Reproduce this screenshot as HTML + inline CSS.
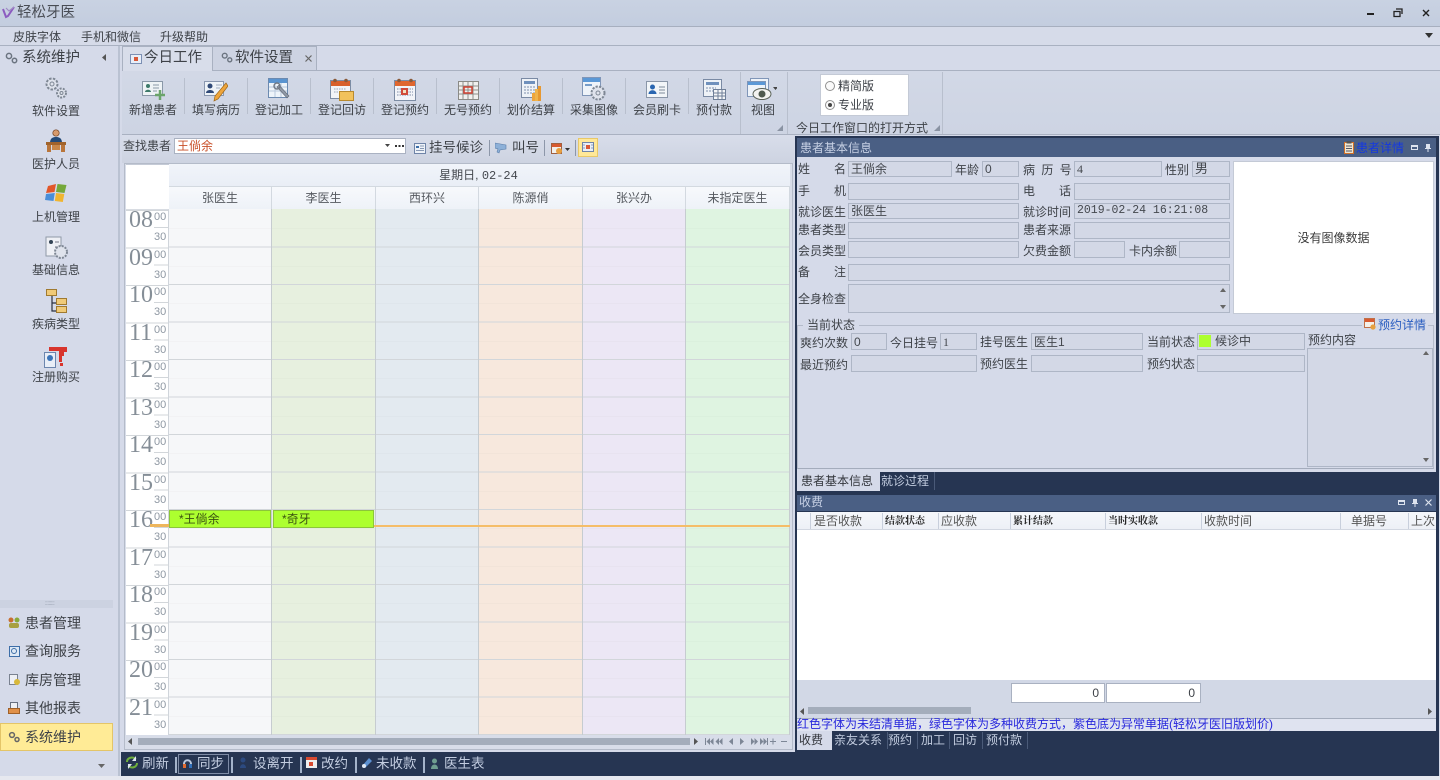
<!DOCTYPE html>
<html lang="zh"><head><meta charset="utf-8"><title>轻松牙医</title>
<style>
html,body{margin:0;padding:0}
body{width:1440px;height:780px;position:relative;overflow:hidden;background:#d5dae9;font-family:"Liberation Sans","Noto Sans CJK SC",sans-serif;font-size:12px;color:#3e4248}
div,span,svg{position:absolute;box-sizing:border-box}
.t{white-space:nowrap;line-height:14px;height:14px}
.b{font-size:13.5px}
.w{color:#c3cde0}
.f{background:#d3d8e6;border:1px solid #aeb6c6;line-height:14px;padding:1px 0 0 2px;white-space:nowrap;color:#44484e;font-size:12px}
.c{text-align:center}
.col{top:209px;height:526px;background-position:0 1px;background-image:repeating-linear-gradient(to bottom,transparent 0,transparent 36.5px,#d2d6da 36.5px,#d2d6da 37.5px),repeating-linear-gradient(to bottom,transparent 0,transparent 18.25px,rgba(0,0,0,.035) 18.25px,rgba(0,0,0,.035) 19.25px,transparent 19.25px,transparent 37.5px);border-right:1px solid #c6ccd0}
.h{font:24px/24px "Liberation Serif",serif;color:#858e97;left:129px;height:24px}
.m{font-size:11px;line-height:11px;color:#8f98a3;left:154px;height:11px;font-family:"Liberation Sans",sans-serif}
.hd{top:187px;height:22px;text-align:center;line-height:22px;border-right:1px solid #d3d9e0;background:linear-gradient(#f7f9fc,#eef2f8);color:#55595f}
.sep{width:1px;background:#b8bfcd;top:78px;height:36px}
.th{top:512px;height:18px;line-height:18px;color:#555;white-space:nowrap}
.thb{font-size:10px;line-height:20px;font-weight:bold;color:#222;font-family:"Liberation Sans","Noto Serif CJK SC",serif}
.v{width:1px;top:513px;height:16px;background:#c8cfdc}
.vb{width:2px;top:757px;height:16px;background:#a4b3ca}
</style></head><body>

<!-- title bar -->
<div style="left:0;top:0;width:1440px;height:27px;background:linear-gradient(#c9d2e2,#c3cddf);border-bottom:1px solid #a7afbf"></div>
<svg style="left:2px;top:5px" width="13" height="15" viewBox="0 0 13 15"><path d="M1 4l3 8 2-1 6-9" fill="none" stroke="#8c5cc0" stroke-width="2"/><path d="M4 3l3 3 5-4" fill="none" stroke="#a08bc4" stroke-width="1.2"/></svg>
<span class="t" style="left:17px;top:6px;font-size:14.5px;color:#484c54">轻松牙医</span>
<div style="left:1367px;top:13px;width:7px;height:2px;background:#222"></div>
<svg style="left:1393px;top:8px" width="10" height="10" viewBox="0 0 10 10"><path d="M3 1h6v5M1 3.5h6v5H1z" fill="none" stroke="#222" stroke-width="1.3"/></svg>
<svg style="left:1422px;top:9px" width="8" height="8" viewBox="0 0 8 8"><path d="M1 1l6 6M7 1l-6 6" stroke="#222" stroke-width="1.4"/></svg>

<!-- menu -->
<div style="left:0;top:27px;width:1440px;height:19px;background:#d6dbe9;border-bottom:1px solid #a9b1c1"></div>
<span class="t" style="left:13px;top:30px">皮肤字体</span>
<span class="t" style="left:81px;top:30px">手机和微信</span>
<span class="t" style="left:160px;top:30px">升级帮助</span>
<svg style="left:1425px;top:33px" width="8" height="5"><path d="M0 0h8L4 5z" fill="#333"/></svg>

<!-- left panel -->
<div style="left:0;top:46px;width:120px;height:734px;background:#d5dae9;border-right:2px solid #bac2d2"></div>
<svg style="left:5px;top:52px" width="13" height="12" viewBox="0 0 13 12"><circle cx="4" cy="4" r="2.6" fill="none" stroke="#6b7480" stroke-width="1.5"/><circle cx="9.5" cy="8.5" r="2.2" fill="none" stroke="#6b7480" stroke-width="1.5"/></svg>
<span class="t" style="left:22px;top:51px;font-size:14.5px">系统维护</span>
<svg style="left:102px;top:54px" width="4" height="7"><path d="M4 0v7L0 3.5z" fill="#555"/></svg>

<svg style="left:44px;top:76px" width="24" height="24" viewBox="0 0 24 24"><circle cx="8" cy="8" r="5.5" fill="#dfe3ec" stroke="#7e8794" stroke-width="2" stroke-dasharray="2.5 1.3"/><circle cx="8" cy="8" r="2" fill="none" stroke="#7e8794"/><circle cx="17.5" cy="17" r="4.5" fill="#dfe3ec" stroke="#7e8794" stroke-width="2" stroke-dasharray="2 1.2"/><circle cx="17.5" cy="17" r="1.5" fill="none" stroke="#7e8794"/></svg>
<span class="t" style="left:32px;top:104px">软件设置</span>
<svg style="left:44px;top:129px" width="24" height="24" viewBox="0 0 24 24"><circle cx="12" cy="4" r="3.2" fill="#d69a6c" stroke="#704020" stroke-width=".7"/><path d="M6 14c0-5 3-6 6-6s6 1 6 6z" fill="#234a78"/><rect x="2" y="13" width="20" height="3" fill="#a0632c"/><rect x="3" y="16" width="4" height="7" fill="#b9753a"/><rect x="17" y="16" width="4" height="7" fill="#b9753a"/><rect x="8" y="16" width="8" height="5" fill="#c98748"/></svg>
<span class="t" style="left:32px;top:157px">医护人员</span>
<svg style="left:45px;top:183px" width="23" height="22" viewBox="0 0 23 22"><path d="M3 3l8-2-1.500 8L1 10z" fill="#e2572a"/><path d="M12.500 1l9 1-2 8-8.500-1z" fill="#75a83a"/><path d="M1 11l8.800-1L8.500 18 0 17z" fill="#4a8ed8"/><path d="M11 10l8.300 1-1.500 8-8-1z" fill="#f0b530"/></svg>
<span class="t" style="left:32px;top:210px">上机管理</span>
<svg style="left:45px;top:236px" width="24" height="24" viewBox="0 0 24 24"><rect x="1" y="1" width="15" height="19" fill="#eef0f5" stroke="#9099a8"/><circle cx="6" cy="6" r="2" fill="#345"/><path d="M10 6h4M10 11h3" stroke="#778"/><circle cx="16" cy="16" r="6" fill="#dfe3ec" stroke="#7e8794" stroke-width="2" stroke-dasharray="2 1.2"/></svg>
<span class="t" style="left:32px;top:263px">基础信息</span>
<svg style="left:46px;top:289px" width="21" height="24" viewBox="0 0 21 24"><path d="M6 7v15h5M6 14h5" fill="none" stroke="#2a3140" stroke-width="1.2"/><rect x="0.500" y="0.500" width="10" height="6" fill="#f0ca78" stroke="#a07a30"/><rect x="10.500" y="9.500" width="10" height="6" fill="#f0ca78" stroke="#a07a30"/><rect x="10.500" y="17.500" width="10" height="6" fill="#f0ca78" stroke="#a07a30"/></svg>
<span class="t" style="left:32px;top:317px">疾病类型</span>
<svg style="left:44px;top:346px" width="24" height="22" viewBox="0 0 24 22"><path d="M5 1h18v5h-3v4h-2v6h-3V5H5z" fill="#d8342c"/><rect x="16" y="17" width="3" height="3" fill="#d8342c"/><rect x="0.500" y="6.500" width="11" height="15" fill="#e9eef7" stroke="#6c86ae"/><circle cx="6" cy="12" r="3" fill="#3b74b8"/></svg>
<span class="t" style="left:32px;top:370px">注册购买</span>

<div style="left:0;top:600px;width:113px;height:8px;background:#ccd2e1"></div>
<span class="t" style="left:45px;top:597px;font-size:6px;color:#8a92a2;letter-spacing:-.5px">::::::::</span>

<svg style="left:8px;top:617px" width="12" height="12"><circle cx="3" cy="3" r="2.5" fill="#c86e30"/><circle cx="9" cy="3" r="2.500" fill="#88a838"/><rect x="1" y="6" width="10" height="5" rx="2" fill="#a8a040"/></svg>
<span class="t b" style="left:25px;top:616px;font-size:14px">患者管理</span>
<svg style="left:9px;top:646px" width="11" height="11"><rect x=".5" y=".5" width="10" height="10" fill="#dde8f5" stroke="#3d6ea8"/><circle cx="5" cy="5" r="2.500" fill="none" stroke="#3d6ea8"/></svg>
<span class="t b" style="left:25px;top:644px;font-size:14px">查询服务</span>
<svg style="left:9px;top:674px" width="11" height="12"><rect x=".5" y=".5" width="8" height="10" fill="#eef0f5" stroke="#7a8290"/><circle cx="8" cy="8" r="3" fill="#d8b83a"/></svg>
<span class="t b" style="left:25px;top:673px;font-size:14px">库房管理</span>
<svg style="left:8px;top:702px" width="12" height="12"><rect x="2.500" y=".5" width="7" height="6" fill="#eef0f5" stroke="#687080"/><rect x=".5" y="6.500" width="11" height="5" fill="#e09048" stroke="#a06028"/></svg>
<span class="t b" style="left:25px;top:701px;font-size:14px">其他报表</span>
<div style="left:0;top:723px;width:113px;height:28px;background:#ffeb96;border:1px solid #e4c568"></div>
<svg style="left:8px;top:731px" width="12" height="12" viewBox="0 0 12 12"><circle cx="4" cy="4" r="2.400" fill="none" stroke="#666" stroke-width="1.500"/><circle cx="9" cy="8.500" r="2" fill="none" stroke="#666" stroke-width="1.500"/></svg>
<span class="t b" style="left:25px;top:730px;font-size:14px">系统维护</span>
<svg style="left:98px;top:764px" width="7" height="4"><path d="M0 0h7L3.500 4z" fill="#666"/></svg>

<!-- tabs -->
<div style="left:122px;top:70px;width:1318px;height:1px;background:#a9b1c1"></div>
<div style="left:122px;top:46px;width:91px;height:25px;background:#d8ddea;border:1px solid #a9b1c1;border-bottom:0"></div>
<div style="left:213px;top:46px;width:104px;height:24px;background:#cdd3e2;border:1px solid #a9b1c1;border-left:0;border-bottom:0"></div>
<svg style="left:130px;top:54px" width="12" height="10"><rect x=".5" y=".5" width="11" height="9" fill="#e8eef8" stroke="#7c90b4"/><rect x="4" y="3" width="4" height="4" fill="#d85838"/></svg>
<span class="t" style="left:144px;top:51px;font-size:14.5px">今日工作</span>
<svg style="left:221px;top:52px" width="12" height="11" viewBox="0 0 13 12"><circle cx="4" cy="4" r="2.600" fill="none" stroke="#6b7480" stroke-width="1.500"/><circle cx="9.500" cy="8.500" r="2.200" fill="none" stroke="#6b7480" stroke-width="1.500"/></svg>
<span class="t" style="left:235px;top:51px;font-size:14.5px">软件设置</span>
<svg style="left:305px;top:55px" width="7" height="7"><path d="M.5 .5l6 6M6.500 .5l-6 6" stroke="#666" stroke-width="1.200"/></svg>

<!-- ribbon -->
<div style="left:122px;top:71px;width:1318px;height:64px;background:linear-gradient(#d2d8e6,#cdd4e3);border-bottom:1px solid #a9b1c1"></div>
<svg style="left:142px;top:81px" width="24" height="20" viewBox="0 0 24 20"><rect x=".5" y=".5" width="20" height="14" fill="#eef3f5" stroke="#8a98a8"/><circle cx="6" cy="5" r="2" fill="#3d7a6a"/><path d="M3 11c0-3 6-3 6 0z" fill="#3d7a6a"/><path d="M11 4h6M11 7h6M11 10h4" stroke="#8a98a8"/><path d="M18 9v10M13 14h10" stroke="#6aa46a" stroke-width="2.500"/></svg>
<span class="t" style="left:129px;top:103px">新增患者</span>
<div class="sep" style="left:184px"></div>
<svg style="left:204px;top:80px" width="24" height="22" viewBox="0 0 24 22"><rect x=".5" y="1.500" width="19" height="14" fill="#eef3f8" stroke="#8a98b0"/><circle cx="6" cy="6" r="2.500" fill="#304a78"/><path d="M2 13c0-4 8-4 8 0z" fill="#304a78"/><path d="M12 5h6M12 8h4" stroke="#a0acc0"/><path d="M22 3l-11 13-1 5 4-2L24 6z" fill="#eea53c" stroke="#a06818" stroke-width=".7"/></svg>
<span class="t" style="left:192px;top:103px">填写病历</span>
<div class="sep" style="left:247px"></div>
<svg style="left:268px;top:78px" width="23" height="24" viewBox="0 0 23 24"><rect x=".5" y=".5" width="19" height="19" fill="#eef4fa" stroke="#6c8ab0"/><rect x="1" y="1" width="18" height="4" fill="#5a94d0"/><path d="M1 9h18M1 13h18M7 5v14M13 5v14" stroke="#b8c8dc"/><path d="M9 9l10 11 2-2L11 7z" fill="#8f98a6" stroke="#606874" stroke-width=".6"/><circle cx="9" cy="8" r="3" fill="none" stroke="#707884" stroke-width="1.400"/></svg>
<span class="t" style="left:255px;top:103px">登记加工</span>
<div class="sep" style="left:310px"></div>
<svg style="left:330px;top:78px" width="24" height="23" viewBox="0 0 24 23"><rect x=".5" y="2.500" width="20" height="18" fill="#f2f4f8" stroke="#7c8ca4"/><rect x="1" y="3" width="19" height="5" fill="#d8602c"/><circle cx="5" cy="2.500" r="1.800" fill="#8a5a3a"/><circle cx="16" cy="2.500" r="1.800" fill="#8a5a3a"/><path d="M4 11h12M4 14h12" stroke="#99a6ba" stroke-dasharray="1.500 1"/><rect x="9.500" y="13.500" width="14" height="9" fill="#f2c25c" stroke="#b98a2e"/></svg>
<span class="t" style="left:318px;top:103px">登记回访</span>
<div class="sep" style="left:373px"></div>
<svg style="left:394px;top:78px" width="22" height="23" viewBox="0 0 22 23"><rect x=".5" y="2.500" width="21" height="20" fill="#f2f4f8" stroke="#7c8ca4"/><rect x="1" y="3" width="20" height="5" fill="#e0662e"/><circle cx="5" cy="2.500" r="1.800" fill="#8a5a3a"/><circle cx="17" cy="2.500" r="1.800" fill="#8a5a3a"/><path d="M3 11h16M3 14h16M3 17h16" stroke="#7e8ca8" stroke-dasharray="1.500 1"/><rect x="7" y="10" width="7" height="7" fill="#d04a38"/><rect x="9" y="12" width="3" height="3" fill="#f2e0c0"/></svg>
<span class="t" style="left:381px;top:103px">登记预约</span>
<div class="sep" style="left:436px"></div>
<svg style="left:458px;top:79px" width="21" height="21" viewBox="0 0 21 21"><rect x=".5" y="2.500" width="20" height="18" fill="#f0f0ee" stroke="#8a8a86"/><path d="M1 7h19M1 11h19M1 15h19M5 3v17M10 3v17M15 3v17" stroke="#8f8f8c"/><rect x="6" y="8" width="8" height="6" fill="none" stroke="#d04030" stroke-width="1.500"/></svg>
<span class="t" style="left:444px;top:103px">无号预约</span>
<div class="sep" style="left:499px"></div>
<svg style="left:521px;top:78px" width="21" height="24" viewBox="0 0 21 24"><rect x=".5" y=".5" width="16" height="19" fill="#eef2f7" stroke="#7a8aa4"/><rect x="3" y="3" width="11" height="3" fill="#6f90bc"/><path d="M3 9h11M3 12h11M3 15h11" stroke="#7f90ac" stroke-dasharray="2 1"/><rect x="11" y="15" width="3" height="8" fill="#eea53c"/><rect x="14" y="11" width="3" height="12" fill="#f0b44c"/><rect x="17" y="8" width="3" height="15" fill="#e79830"/></svg>
<span class="t" style="left:507px;top:103px">划价结算</span>
<div class="sep" style="left:562px"></div>
<svg style="left:582px;top:77px" width="25" height="25" viewBox="0 0 25 25"><rect x=".5" y=".5" width="18" height="18" fill="#eef3f9" stroke="#8096b8"/><rect x="1" y="1" width="17" height="4" fill="#5b98d6"/><path d="M3 8h7" stroke="#4f7fb8" stroke-width="1.500"/><circle cx="16" cy="16" r="6.500" fill="#dfe3ec" stroke="#7e8794" stroke-width="2" stroke-dasharray="2.200 1.300"/><circle cx="16" cy="16" r="2" fill="none" stroke="#7e8794"/></svg>
<span class="t" style="left:570px;top:103px">采集图像</span>
<div class="sep" style="left:625px"></div>
<svg style="left:646px;top:81px" width="22" height="17" viewBox="0 0 22 17"><rect x=".5" y=".5" width="21" height="16" fill="#f2f5f8" stroke="#8a96a8"/><circle cx="6.500" cy="6" r="2.500" fill="#2a66b0"/><path d="M2.500 13c0-5 8-5 8 0z" fill="#2a66b0"/><path d="M13 6h6M13 9h6M13 12h6" stroke="#7f8c9a"/></svg>
<span class="t" style="left:633px;top:103px">会员刷卡</span>
<div class="sep" style="left:688px"></div>
<svg style="left:703px;top:79px" width="23" height="21" viewBox="0 0 23 21"><rect x=".5" y=".5" width="18" height="17" fill="#eef2f7" stroke="#7a8aa4"/><rect x="3" y="3" width="13" height="3" fill="#6f90bc"/><path d="M3 9h10M3 12h8" stroke="#7f90ac" stroke-dasharray="2 1"/><rect x="10.500" y="10.500" width="12" height="10" fill="#f4f6f8" stroke="#6f7f98"/><path d="M11 14h11M11 17h11M15 11v9M19 11v9" stroke="#6f7f98"/></svg>
<span class="t" style="left:696px;top:103px">预付款</span>
<div style="left:740px;top:72px;width:1px;height:62px;background:#b8bfcd"></div>
<svg style="left:747px;top:78px" width="30" height="24" viewBox="0 0 30 24"><rect x="3.500" y=".5" width="18" height="15" fill="#eef3f9" stroke="#8096b8"/><rect x=".5" y="3.500" width="18" height="15" fill="#eef3f9" stroke="#8096b8"/><rect x="1" y="4" width="17" height="3" fill="#5b98d6"/><ellipse cx="15" cy="16" rx="9" ry="5.500" fill="#f3f3f0" stroke="#5a6258"/><circle cx="15" cy="16" r="3.500" fill="#4f5a4e"/><path d="M26 9h5l-2.500 3z" fill="#444"/></svg>
<span class="t" style="left:751px;top:103px">视图</span>
<svg style="left:777px;top:125px" width="6" height="6"><path d="M6 0v6H0z" fill="#8a93a3"/></svg>
<div style="left:787px;top:72px;width:1px;height:62px;background:#b8bfcd"></div>
<div style="left:820px;top:74px;width:89px;height:42px;background:#fff;border:1px solid #c4cad6"></div>
<div style="left:825px;top:81px;width:10px;height:10px;border-radius:50%;border:1px solid #909090;background:#fafafa"></div>
<span class="t" style="left:838px;top:79px">精简版</span>
<div style="left:825px;top:100px;width:10px;height:10px;border-radius:50%;border:1px solid #909090;background:#fafafa"></div>
<div style="left:828px;top:103px;width:4px;height:4px;border-radius:50%;background:#444"></div>
<span class="t" style="left:838px;top:98px">专业版</span>
<span class="t" style="left:796px;top:121px">今日工作窗口的打开方式</span>
<svg style="left:934px;top:125px" width="6" height="6"><path d="M6 0v6H0z" fill="#8a93a3"/></svg>
<div style="left:942px;top:72px;width:1px;height:62px;background:#b8bfcd"></div>

<!-- search toolbar -->
<div style="left:122px;top:135px;width:672px;height:28px;background:linear-gradient(#d8ddea,#cdd3e1)"></div>
<span class="t" style="left:123px;top:139px">查找患者</span>
<div style="left:174px;top:138px;width:232px;height:16px;background:#fff;border:1px solid #aab2c2"></div>
<span class="t" style="left:177px;top:139px;color:#c8502a">王倘余</span>
<svg style="left:385px;top:144px" width="5" height="3"><path d="M0 0h5L2.500 3z" fill="#444"/></svg>
<div style="left:395px;top:145px;width:9px;height:2px;background-image:linear-gradient(to right,#333 2px,transparent 2px);background-size:3.500px 2px"></div>
<svg style="left:414px;top:143px" width="12" height="11"><rect x=".5" y=".5" width="11" height="10" fill="#eef2f8" stroke="#6f84a8"/><rect x="2" y="3" width="3" height="2" fill="#3d6ea8"/><path d="M6 3h4M6 5.500h4M2 7.500h8" stroke="#8798b4"/></svg>
<span class="t" style="left:429px;top:141px;font-size:13.500px">挂号候诊</span>
<div style="left:489px;top:140px;width:1px;height:16px;background:#8d97a9"></div>
<svg style="left:495px;top:142px" width="13" height="12"><path d="M0 1l11 2v4l-6 1-1 3-2-1 1-3-3-1z" fill="#8db0d8" stroke="#5a7ca8" stroke-width=".6"/></svg>
<span class="t" style="left:512px;top:141px;font-size:13.500px">叫号</span>
<div style="left:544px;top:140px;width:1px;height:16px;background:#8d97a9"></div>
<svg style="left:551px;top:143px" width="19" height="12"><rect x=".5" y=".5" width="10" height="10" fill="#f2f0ec" stroke="#a06040"/><rect x="1" y="1" width="9" height="3" fill="#d85a30"/><circle cx="8" cy="8" r="3" fill="#e6a040"/><path d="M14 5h5l-2.500 3z" fill="#333"/></svg>
<div style="left:575px;top:140px;width:1px;height:16px;background:#8d97a9"></div>
<div style="left:578px;top:138px;width:20px;height:19px;background:#ffe898;border:1px solid #e8c868"></div>
<svg style="left:582px;top:142px" width="12" height="10"><rect x=".5" y=".5" width="11" height="9" fill="#e8eef8" stroke="#6f84a8"/><rect x="4" y="3" width="4" height="4" fill="#d85838"/><path d="M1 3h2M9 3h2M1 6h2M9 6h2" stroke="#90a0bc"/></svg>

<!-- scheduler -->
<div style="left:124px;top:163px;width:669px;height:587px;background:#d8dde9;border:1px solid #b4bbc9"></div>
<div style="left:126px;top:164px;width:664px;height:571px;background:#fff;border-top:1px solid #c4cad6"></div>
<div style="left:169px;top:164px;width:621px;height:23px;background:linear-gradient(#f1f4fa,#e9eef6);text-align:center;line-height:23px;color:#44484e;padding-right:2px;border-bottom:1px solid #d3d9e0">星期日, <span style="position:static;font-family:'Liberation Mono',monospace;font-size:12px">02-24</span></div>
<div class="hd" style="left:169px;width:103px">张医生</div>
<div class="hd" style="left:272px;width:104px">李医生</div>
<div class="hd" style="left:376px;width:103px">西环兴</div>
<div class="hd" style="left:479px;width:104px">陈源俏</div>
<div class="hd" style="left:583px;width:103px">张兴办</div>
<div class="hd" style="left:686px;width:104px">未指定医生</div>
<div class="col" style="left:169px;width:103px;background-color:#f6f7f9"></div>
<div class="col" style="left:272px;width:104px;background-color:#e7f0df"></div>
<div class="col" style="left:376px;width:103px;background-color:#e3eaf0"></div>
<div class="col" style="left:479px;width:104px;background-color:#f7e8dd"></div>
<div class="col" style="left:583px;width:103px;background-color:#ece7f5"></div>
<div class="col" style="left:686px;width:104px;background-color:#dff4e1"></div>
<div style="left:126px;top:209px;width:43px;height:526px;background-position:0 1px;background-image:repeating-linear-gradient(to bottom,transparent 0,transparent 36.500px,#d2d6da 36.500px,#d2d6da 37.500px);border-right:1px solid #d0d5db;border-top:1px solid #d8dce2"></div>
<div style="left:154px;top:209px;width:15px;height:526px;background-image:repeating-linear-gradient(to bottom,transparent 0,transparent 18px,#d2d6da 18px,#d2d6da 19px,transparent 19px,transparent 37.500px)"></div>

<span class="h" style="top:208px">08</span><span class="m" style="top:212px">00</span><span class="m" style="top:232px">30</span>
<span class="h" style="top:246px">09</span><span class="m" style="top:250px">00</span><span class="m" style="top:270px">30</span>
<span class="h" style="top:283px">10</span><span class="m" style="top:287px">00</span><span class="m" style="top:307px">30</span>
<span class="h" style="top:321px">11</span><span class="m" style="top:325px">00</span><span class="m" style="top:345px">30</span>
<span class="h" style="top:358px">12</span><span class="m" style="top:362px">00</span><span class="m" style="top:382px">30</span>
<span class="h" style="top:396px">13</span><span class="m" style="top:400px">00</span><span class="m" style="top:420px">30</span>
<span class="h" style="top:433px">14</span><span class="m" style="top:437px">00</span><span class="m" style="top:457px">30</span>
<span class="h" style="top:471px">15</span><span class="m" style="top:475px">00</span><span class="m" style="top:495px">30</span>
<span class="h" style="top:508px">16</span><span class="m" style="top:512px">00</span><span class="m" style="top:532px">30</span>
<span class="h" style="top:546px">17</span><span class="m" style="top:550px">00</span><span class="m" style="top:570px">30</span>
<span class="h" style="top:583px">18</span><span class="m" style="top:587px">00</span><span class="m" style="top:607px">30</span>
<span class="h" style="top:621px">19</span><span class="m" style="top:625px">00</span><span class="m" style="top:645px">30</span>
<span class="h" style="top:658px">20</span><span class="m" style="top:662px">00</span><span class="m" style="top:682px">30</span>
<span class="h" style="top:696px">21</span><span class="m" style="top:700px">00</span><span class="m" style="top:720px">30</span>

<div style="left:150px;top:524px;width:19px;height:3px;background:#eeb65c"></div>
<div style="left:374px;top:525px;width:416px;height:2px;background:#f5bd68"></div>
<div style="left:169px;top:510px;width:102px;height:18px;background:#adff2f;border:1px solid #8cc63a"></div>
<span class="t" style="left:179px;top:512px;color:#3a5010">*王倘余</span>
<div style="left:273px;top:510px;width:101px;height:18px;background:#adff2f;border:1px solid #8cc63a"></div>
<span class="t" style="left:282px;top:512px;color:#3a5010">*奇牙</span>

<svg style="left:128px;top:738px" width="4" height="7"><path d="M4 0v7L0 3.500z" fill="#555"/></svg>
<div style="left:138px;top:738px;width:552px;height:7px;background:#a4adbb"></div>
<svg style="left:694px;top:738px" width="4" height="7"><path d="M0 0v7l4-3.500z" fill="#555"/></svg>
<svg style="left:704px;top:738px" width="84" height="7" viewBox="0 0 84 7"><path d="M1 0h1v7H1zM6 0L2.500 3.500 6 7zM9.500 0L6 3.500 9.500 7zM15 0l-3.500 3.500L15 7zM18.500 0L15 3.500 18.500 7zM29 0l-4 3.500 4 3.500zM36 0l4 3.500-4 3.500zM47 0l3.500 3.500L47 7zM50.500 0L54 3.500 50.500 7zM56 0l3.500 3.500L56 7zM59.500 0L63 3.500 59.500 7zM63 0h1v7h-1z" fill="#7d8796"/><path d="M66 3.500h6M69 .5v6M77 3.500h6" stroke="#7d8796"/></svg>

<!-- bottom bar -->
<div style="left:121px;top:752px;width:1318px;height:24px;background:#263552"></div>
<div style="left:0;top:776px;width:1440px;height:4px;background:#e6e8ef"></div>
<svg style="left:126px;top:756px" width="12" height="13"><path d="M1 6c0-4 5-6 9-3M11 7c0 4-5 6-9 3" fill="none" stroke="#6fb03c" stroke-width="2"/><path d="M10 0v5H6z" fill="#e0e6ef"/><path d="M2 13V8h4z" fill="#e0e6ef"/></svg>
<span class="t w" style="left:142px;top:757px;font-size:13.500px">刷新</span>
<div class="vb" style="left:175px"></div>
<div style="left:178px;top:754px;width:51px;height:20px;border:1px solid #7f8ca6"></div>
<svg style="left:182px;top:757px" width="11" height="12"><path d="M2 7c0-5 7-5 7 0" fill="none" stroke="#b8c6dc" stroke-width="2"/><rect x="1" y="7" width="3" height="4" fill="#e06a30"/><rect x="7" y="7" width="3" height="4" fill="#2f6eb8"/></svg>
<span class="t w" style="left:197px;top:757px;font-size:13.500px">同步</span>
<div class="vb" style="left:231px"></div>
<svg style="left:239px;top:757px" width="8" height="12"><circle cx="4" cy="3" r="2.500" fill="#2c4a80"/><path d="M1 11c0-5 6-5 6 0z" fill="#2c4a80"/></svg>
<span class="t w" style="left:253px;top:757px;font-size:13.500px">设离开</span>
<div class="vb" style="left:300px"></div>
<svg style="left:306px;top:757px" width="11" height="11"><rect width="11" height="11" fill="#eee"/><rect width="11" height="3" fill="#d84a30"/><rect x="3" y="5" width="4" height="4" fill="#d84a30"/></svg>
<span class="t w" style="left:321px;top:757px;font-size:13.500px">改约</span>
<div class="vb" style="left:355px"></div>
<svg style="left:361px;top:757px" width="11" height="12"><path d="M1 9l7-8 3 3-7 7z" fill="#5c90d0"/><circle cx="3" cy="9" r="2" fill="#e0e8f4"/></svg>
<span class="t w" style="left:376px;top:757px;font-size:13.500px">未收款</span>
<div class="vb" style="left:423px"></div>
<svg style="left:430px;top:758px" width="9" height="11"><circle cx="4.500" cy="3" r="2.500" fill="#6f9e90"/><path d="M1 11c0-6 7-6 7 0z" fill="#6f9e90"/></svg>
<span class="t w" style="left:444px;top:757px;font-size:13.500px">医生表</span>

<!-- right panel -->
<div style="left:795px;top:136px;width:644px;height:616px;background:#263552"></div>
<div style="left:797px;top:138px;width:639px;height:19px;background:#4a5f84"></div>
<span class="t" style="left:800px;top:141px;color:#c6d0e4">患者基本信息</span>
<svg style="left:1344px;top:141px" width="10" height="13"><rect x=".5" y="1.500" width="9" height="11" fill="#f0e6d0" stroke="#d07028"/><rect x="2.500" y="0" width="5" height="2.500" fill="#555"/><path d="M2 5h6M2 7.500h6M2 10h6" stroke="#556"/></svg>
<span class="t" style="left:1356px;top:141px;color:#1438e0">患者详情</span>
<div style="left:1411px;top:145px;width:7px;height:5px;border:1px solid #dde3ee;border-top-width:2px"></div>
<svg style="left:1425px;top:144px" width="6" height="8"><path d="M1 0h4v4h1v1H3.500v3h-1V5H0V4h1z" fill="#dde3ee"/></svg>
<div style="left:797px;top:157px;width:639px;height:315px;background:#d5dae9"></div>

<span class="t" style="left:798px;top:162px">姓</span><span class="t" style="left:834px;top:162px">名</span>
<div class="f" style="left:848px;top:161px;width:104px;height:16px;padding-top:0">王倘余</div>
<span class="t" style="left:955px;top:163px">年龄</span>
<div class="f" style="left:982px;top:161px;width:37px;height:16px;padding-top:0">0</div>
<span class="t" style="left:1023px;top:163px;word-spacing:3px">病 历 号</span>
<div class="f" style="left:1074px;top:161px;width:88px;height:16px;padding-top:0;font-family:'Liberation Serif',serif">4</div>
<span class="t" style="left:1165px;top:163px">性别</span>
<div class="f" style="left:1192px;top:161px;width:38px;height:16px;padding-top:0;font-size:13px">男</div>

<span class="t" style="left:798px;top:184px">手</span><span class="t" style="left:834px;top:184px">机</span>
<div class="f" style="left:848px;top:183px;width:171px;height:17px"></div>
<span class="t" style="left:1023px;top:184px">电</span><span class="t" style="left:1059px;top:184px">话</span>
<div class="f" style="left:1074px;top:183px;width:156px;height:17px"></div>

<span class="t" style="left:798px;top:205px">就诊医生</span>
<div class="f" style="left:848px;top:203px;width:171px;height:16px;padding-top:0">张医生</div>
<span class="t" style="left:1023px;top:205px">就诊时间</span>
<div class="f" style="left:1074px;top:203px;width:156px;height:16px;padding-top:0;font-family:'Liberation Mono',monospace;font-size:11.500px">2019-02-24 16:21:08</div>

<span class="t" style="left:798px;top:223px">患者类型</span>
<div class="f" style="left:848px;top:222px;width:171px;height:17px"></div>
<span class="t" style="left:1023px;top:223px">患者来源</span>
<div class="f" style="left:1074px;top:222px;width:156px;height:17px"></div>

<span class="t" style="left:798px;top:244px">会员类型</span>
<div class="f" style="left:848px;top:241px;width:171px;height:17px"></div>
<span class="t" style="left:1023px;top:244px">欠费金额</span>
<div class="f" style="left:1074px;top:241px;width:51px;height:17px"></div>
<span class="t" style="left:1129px;top:244px">卡内余额</span>
<div class="f" style="left:1179px;top:241px;width:51px;height:17px"></div>

<span class="t" style="left:798px;top:265px">备</span><span class="t" style="left:834px;top:265px">注</span>
<div class="f" style="left:848px;top:264px;width:382px;height:17px"></div>
<span class="t" style="left:798px;top:292px">全身检查</span>
<div class="f" style="left:848px;top:284px;width:382px;height:29px"></div>
<svg style="left:1220px;top:288px" width="6" height="4"><path d="M3 0l3 4H0z" fill="#666"/></svg>
<svg style="left:1220px;top:305px" width="6" height="4"><path d="M0 0h6L3 4z" fill="#666"/></svg>

<div style="left:1233px;top:161px;width:201px;height:153px;background:#fff;border:1px solid #c4cad6;text-align:center;line-height:152px;color:#3a3a3a">没有图像数据</div>

<div style="left:797px;top:325px;width:637px;height:144px;border:1px solid #b4bbca;border-bottom-color:#a4acbc"></div>
<span class="t" style="left:803px;top:318px;background:#d5dae9;padding:0 4px">当前状态</span>
<div style="left:1362px;top:318px;width:66px;height:14px;background:#d5dae9"></div>
<svg style="left:1364px;top:318px" width="12" height="12"><rect x=".5" y=".5" width="10" height="9" fill="#f4f0e8" stroke="#c07048"/><rect x="1" y="1" width="9" height="3" fill="#d85a30"/><circle cx="9" cy="9" r="2.600" fill="#e6a040"/></svg>
<span class="t" style="left:1378px;top:318px;color:#2a5ec0">预约详情</span>

<span class="t" style="left:800px;top:336px">爽约次数</span>
<div class="f" style="left:851px;top:333px;width:36px;height:17px">0</div>
<span class="t" style="left:890px;top:336px">今日挂号</span>
<div class="f" style="left:940px;top:333px;width:37px;height:17px;font-family:'Liberation Serif',serif">1</div>
<span class="t" style="left:980px;top:335px">挂号医生</span>
<div class="f" style="left:1031px;top:333px;width:112px;height:17px">医生1</div>
<span class="t" style="left:1147px;top:335px">当前状态</span>
<div class="f" style="left:1197px;top:333px;width:108px;height:17px"></div>
<div style="left:1199px;top:335px;width:12px;height:12px;background:#adff2f"></div>
<span class="t" style="left:1215px;top:334px">候诊中</span>
<span class="t" style="left:1308px;top:333px">预约内容</span>
<div class="f" style="left:1307px;top:348px;width:126px;height:119px"></div>
<svg style="left:1423px;top:351px" width="6" height="4"><path d="M3 0l3 4H0z" fill="#666"/></svg>
<svg style="left:1423px;top:458px" width="6" height="4"><path d="M0 0h6L3 4z" fill="#666"/></svg>

<span class="t" style="left:800px;top:358px">最近预约</span>
<div class="f" style="left:851px;top:355px;width:126px;height:17px"></div>
<span class="t" style="left:980px;top:357px">预约医生</span>
<div class="f" style="left:1031px;top:355px;width:112px;height:17px"></div>
<span class="t" style="left:1147px;top:357px">预约状态</span>
<div class="f" style="left:1197px;top:355px;width:108px;height:17px"></div>

<div style="left:797px;top:471px;width:83px;height:20px;background:#d5dae9"></div>
<span class="t" style="left:801px;top:474px;color:#33363c">患者基本信息</span>
<span class="t" style="left:881px;top:474px;color:#c3cde0">就诊过程</span>
<div style="left:934px;top:472px;width:1px;height:18px;background:#4a5a78"></div>

<div style="left:797px;top:495px;width:639px;height:16px;background:#4a5f84"></div>
<span class="t" style="left:799px;top:495px;color:#c6d0e4">收费</span>
<div style="left:1398px;top:500px;width:7px;height:5px;border:1px solid #dde3ee;border-top-width:2px"></div>
<svg style="left:1412px;top:499px" width="6" height="8"><path d="M1 0h4v4h1v1H3.500v3h-1V5H0V4h1z" fill="#dde3ee"/></svg>
<svg style="left:1425px;top:499px" width="7" height="7"><path d="M.5 .5l6 6M6.500 .5l-6 6" stroke="#dde3ee" stroke-width="1.200"/></svg>

<div style="left:797px;top:512px;width:639px;height:168px;background:#fff"></div>
<div style="left:797px;top:512px;width:639px;height:18px;background:linear-gradient(#f5f7fb,#edf0f6);border-bottom:1px solid #d2d7e1"></div>
<div class="v" style="left:810px"></div><div class="v" style="left:882px"></div><div class="v" style="left:938px"></div><div class="v" style="left:1010px"></div><div class="v" style="left:1105px"></div><div class="v" style="left:1201px"></div><div class="v" style="left:1340px"></div><div class="v" style="left:1408px"></div>
<span class="th" style="left:814px">是否收款</span>
<span class="th thb" style="left:885px">结款状态</span>
<span class="th" style="left:941px">应收款</span>
<span class="th thb" style="left:1013px">累计结款</span>
<span class="th thb" style="left:1108px">当时实收款</span>
<span class="th" style="left:1204px">收款时间</span>
<span class="th" style="left:1351px">单据号</span>
<span class="th" style="left:1411px">上次</span>

<div style="left:797px;top:680px;width:639px;height:38px;background:#d2d8e6"></div>
<div style="left:1011px;top:683px;width:94px;height:20px;background:#fff;border:1px solid #a9b1c1;text-align:right;padding-right:5px;line-height:19px">0</div>
<div style="left:1106px;top:683px;width:95px;height:20px;background:#fff;border:1px solid #a9b1c1;text-align:right;padding-right:5px;line-height:19px">0</div>
<svg style="left:800px;top:708px" width="4" height="7"><path d="M4 0v7L0 3.500z" fill="#555"/></svg>
<div style="left:808px;top:707px;width:163px;height:7px;background:#a4adbb"></div>
<svg style="left:1428px;top:708px" width="4" height="7"><path d="M0 0v7l4-3.500z" fill="#555"/></svg>
<div style="left:797px;top:718px;width:639px;height:13px;background:#dfe3f0;border-top:1px solid #a4acbc"></div>
<span class="t" style="left:797px;top:717px;color:#2828dc;font-size:12px">红色字体为未结清单据，绿色字体为多种收费方式，紫色底为异常单据(轻松牙医旧版划价)</span>
<div style="left:797px;top:731px;width:35px;height:19px;background:#d5dae9"></div>
<span class="t" style="left:799px;top:733px;color:#33363c">收费</span>
<span class="t" style="left:834px;top:733px;color:#c3cde0">亲友关系</span>
<span class="t" style="left:888px;top:733px;color:#c3cde0">预约</span>
<span class="t" style="left:921px;top:733px;color:#c3cde0">加工</span>
<span class="t" style="left:953px;top:733px;color:#c3cde0">回访</span>
<span class="t" style="left:986px;top:733px;color:#c3cde0">预付款</span>
<div style="left:887px;top:732px;width:1px;height:17px;background:#4a5a78"></div>
<div style="left:917px;top:732px;width:1px;height:17px;background:#4a5a78"></div>
<div style="left:949px;top:732px;width:1px;height:17px;background:#4a5a78"></div>
<div style="left:982px;top:732px;width:1px;height:17px;background:#4a5a78"></div>
<div style="left:1027px;top:732px;width:1px;height:17px;background:#4a5a78"></div>
</body></html>
